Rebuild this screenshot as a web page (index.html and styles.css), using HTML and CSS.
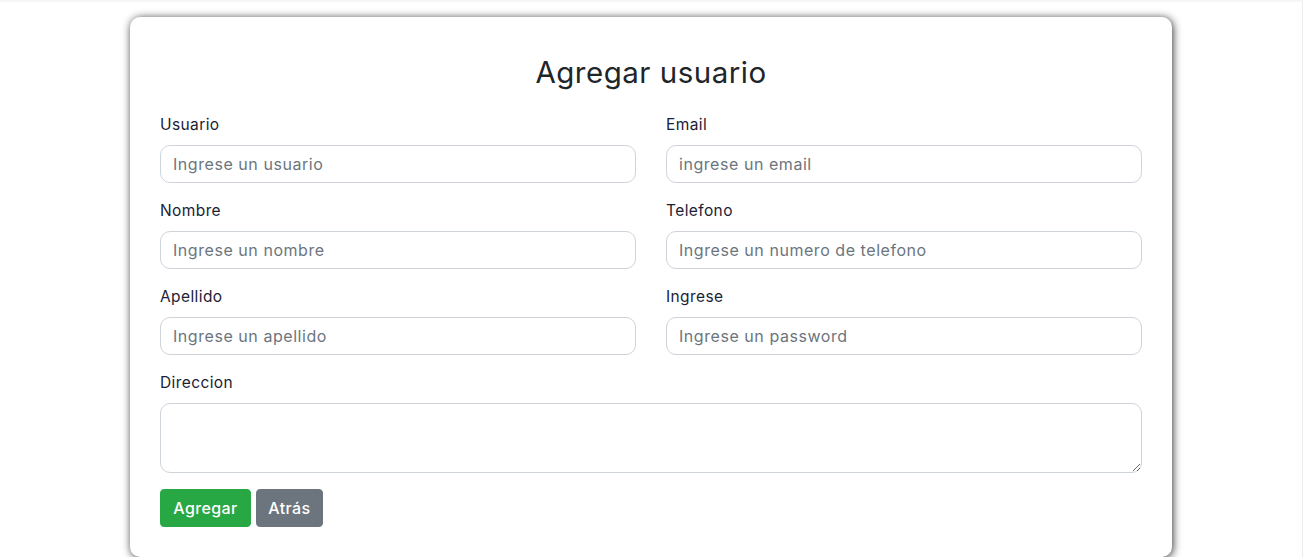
FILE: index.html
```html
<!DOCTYPE html>
<html lang="es">
<head>
<meta charset="utf-8">
<title>Agregar usuario</title>
<link rel="stylesheet" href="styles.css">
</head>
<body>
<div class="page">
  <div class="card">
    <h2 class="title">Agregar usuario</h2>
    <form class="form">
      <div class="grid">
        <div class="group">
          <label class="label">Usuario</label>
          <input class="input" type="text" placeholder="Ingrese un usuario">
        </div>
        <div class="group">
          <label class="label">Email</label>
          <input class="input" type="text" placeholder="ingrese un email">
        </div>
        <div class="group">
          <label class="label">Nombre</label>
          <input class="input" type="text" placeholder="Ingrese un nombre">
        </div>
        <div class="group">
          <label class="label">Telefono</label>
          <input class="input" type="text" placeholder="Ingrese un numero de telefono">
        </div>
        <div class="group">
          <label class="label">Apellido</label>
          <input class="input" type="text" placeholder="Ingrese un apellido">
        </div>
        <div class="group">
          <label class="label">Ingrese</label>
          <input class="input" type="text" placeholder="Ingrese un password">
        </div>
        <div class="group full">
          <label class="label">Direccion</label>
          <textarea class="input textarea"></textarea>
        </div>
      </div>
      <div class="actions">
        <button type="button" class="btn btn-success">Agregar</button>
        <button type="button" class="btn btn-secondary">Atrás</button>
      </div>
    </form>
  </div>
</div>
</body>
</html>
```
FILE: styles.css
```css
* { box-sizing: border-box; }
html, body { margin: 0; padding: 0; }
body {
  font-family: Inter, "Noto Sans", sans-serif;
  color: #212529;
  background: #fff;
  overflow: hidden;
}
.page {
  height: 557px;
  border-top: 2px solid #f6f6f6;
  border-right: 1px solid #ececec;
  padding-top: 15px;
  display: flex;
  justify-content: flex-start;
}
.card {
  margin-left: 130px;
  width: 1042px;
  height: 540px;
  background: #fff;
  border-radius: 10px;
  box-shadow: 1px 1px 9px rgba(0,0,0,0.8);
  padding: 30px 30px;
}
.title {
  margin: 5px 0 0;
  text-align: center;
  font-weight: 400;
  font-size: 29.5px;
  line-height: 40px;
  letter-spacing: 0.5px;
  color: #212529;
}
.form { margin-top: 21px; }
.grid {
  display: grid;
  grid-template-columns: 1fr 1fr;
  column-gap: 30px;
}
.group {
  display: flex;
  flex-direction: column;
  margin-bottom: 16px;
}
.group.full { grid-column: 1 / span 2; }
.label {
  font-size: 15.5px;
  line-height: 24px;
  letter-spacing: 0.4px;
  margin-bottom: 8px;
  color: #1b2235;
}
.input {
  height: 38px;
  border: 1px solid #ced4da;
  border-radius: 10px;
  padding: 6px 12px;
  font-family: inherit;
  font-size: 16px;
  letter-spacing: 0.55px;
  color: #495057;
  background: #fff;
}
.input::placeholder { color: #6c757d; }
.textarea {
  height: 70px;
  resize: vertical;
}
.actions {
  display: flex;
  gap: 5px;
}
.btn {
  height: 38px;
  border: 1px solid transparent;
  border-radius: 4px;
  padding: 0;
  font-family: inherit;
  font-size: 16px;
  letter-spacing: 0.4px;
  font-weight: 500;
  color: #fff;
}
.btn-success { background: #28a745; border-color: #28a745; width: 91px; }
.btn-secondary { background: #6c757d; border-color: #6c757d; width: 67px; }
```
